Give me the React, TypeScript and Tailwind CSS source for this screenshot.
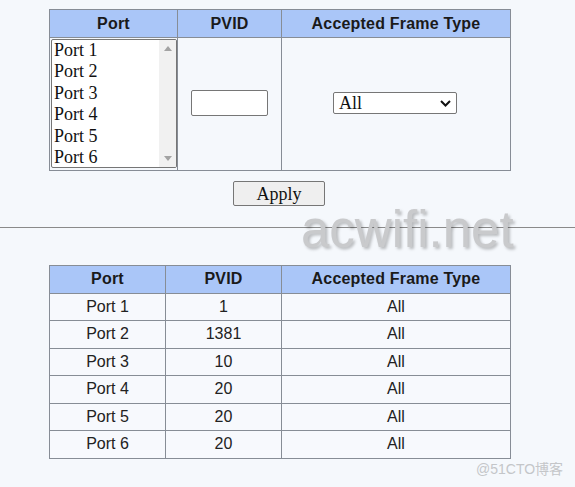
import React from 'react';

const ports = ['Port 1', 'Port 2', 'Port 3', 'Port 4', 'Port 5', 'Port 6'];
const rows = [
  { port: 'Port 1', pvid: '1', type: 'All' },
  { port: 'Port 2', pvid: '1381', type: 'All' },
  { port: 'Port 3', pvid: '10', type: 'All' },
  { port: 'Port 4', pvid: '20', type: 'All' },
  { port: 'Port 5', pvid: '20', type: 'All' },
  { port: 'Port 6', pvid: '20', type: 'All' },
];

const HEAD = "bg-[#aac6f8] h-[27px] flex items-center justify-center text-[16px] font-bold tracking-[0.2px] text-[#1a1a1a]";

function PortListbox() {
  return (
    <div className="ml-px mt-px w-[126px] h-[129px] border border-[#767676] rounded-[2px] bg-white flex overflow-hidden">
      <div className="flex-1 pl-[2px] font-['Liberation_Serif',serif] text-[18px] leading-[21.4px] text-[#111]">
        {ports.map(p => <div key={p}>{p}</div>)}
      </div>
      <div className="w-[17px] bg-[#f1f1f1] flex flex-col justify-between items-center py-[6px]">
        <svg width="8" height="5" viewBox="0 0 8 5"><path d="M0 5 L4 0 L8 5 Z" fill="#a3a3a3" /></svg>
        <svg width="8" height="5" viewBox="0 0 8 5"><path d="M0 0 L4 5 L8 0 Z" fill="#a3a3a3" /></svg>
      </div>
    </div>
  );
}

export default function App() {
  return (
    <div className="relative w-[575px] h-[487px] overflow-hidden bg-[#f5f8fc] font-['Liberation_Sans',Arial,sans-serif] text-[#222]">
      {/* settings table */}
      <div className="pt-[9px] pl-[49px]">
        <div className="w-[462px] grid grid-cols-[127px_103px_228px] gap-px p-px bg-[#878d96]">
          <div className={HEAD}>Port</div>
          <div className={HEAD}>PVID</div>
          <div className={HEAD}>Accepted Frame Type</div>
          <div className="h-[132px] bg-[#f5f8fc]">
            <PortListbox />
          </div>
          <div className="h-[132px] bg-[#f5f8fc] flex items-center justify-center">
            <input className="w-[77px] h-[26px] bg-white border border-[#767676] rounded-[2px] -mt-[2px]" />
          </div>
          <div className="h-[132px] bg-[#f5f8fc] flex items-center justify-center">
            <div className="w-[124px] h-[22px] bg-white border border-[#767676] rounded-[2px] flex items-center justify-between pl-[5px] pr-[5px] -mt-[2px] -ml-[2px] font-['Liberation_Serif',serif] text-[18px] text-[#111]">
              <span>All</span>
              <svg width="11" height="7" viewBox="0 0 11 7"><path d="M1 1 L5.5 5.5 L10 1" fill="none" stroke="#111" strokeWidth="2" /></svg>
            </div>
          </div>
        </div>
      </div>

      <div className="pl-[233px] pt-[10px]">
        <button className="w-[92px] h-[25px] bg-[#efefef] border border-[#767676] rounded-[2px] font-['Liberation_Serif',serif] text-[18px] leading-none text-[#111]">
          Apply
        </button>
      </div>

      <div className="mt-[20px] h-px bg-[#8a8a8a]" />

      {/* status table */}
      <div className="pt-[37px] pl-[49px]">
        <div className="w-[462px] grid grid-cols-[115px_115px_228px] gap-px p-px bg-[#878d96]">
          <div className={HEAD}>Port</div>
          <div className={HEAD}>PVID</div>
          <div className={HEAD}>Accepted Frame Type</div>
          {rows.map(r => (
            <React.Fragment key={r.port}>
              <div className="h-[26.5px] bg-[#f7f9fd] flex items-center justify-center text-[16px]">{r.port}</div>
              <div className="h-[26.5px] bg-[#f7f9fd] flex items-center justify-center text-[16px]">{r.pvid}</div>
              <div className="h-[26.5px] bg-[#f7f9fd] flex items-center justify-center text-[16px]">{r.type}</div>
            </React.Fragment>
          ))}
        </div>
      </div>

      {/* watermarks */}
      <div className="absolute left-[301px] top-[204px] text-[51px] leading-none text-[#c9cacc] [text-shadow:2px_2px_3px_rgba(0,0,0,0.25)] select-none">
        acwifi.net
      </div>
      <div className="absolute left-[476px] top-[459px] text-[14px] text-[#c4c6c9] font-['Liberation_Sans','Noto_Sans_CJK_SC',sans-serif]">
        @51CTO博客
      </div>
    </div>
  );
}
